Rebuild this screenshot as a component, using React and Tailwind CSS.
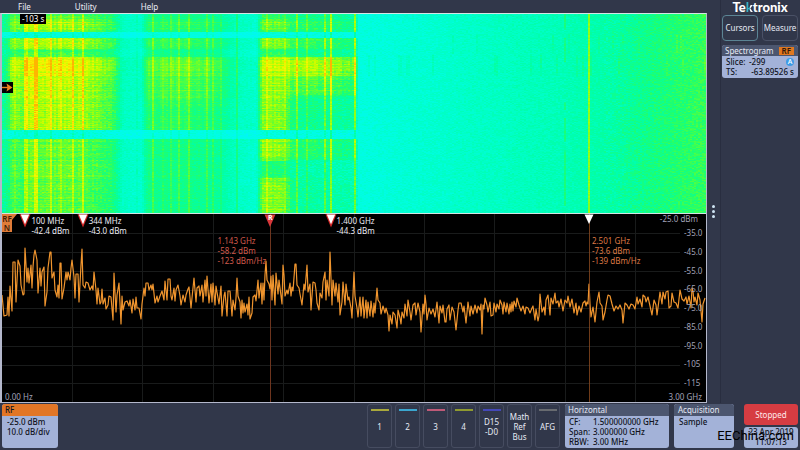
import React from "react";

const SPAN = 3000; // MHz shown across both plots

/* ---------- Spectrogram ---------- */

const COLS = 352;
const ROWS = 199;

function noise(x, y) {
  let h = (x * 374761393 + y * 668265263) | 0;
  h = Math.imul(h ^ (h >>> 13), 1274126177);
  return ((h ^ (h >>> 16)) >>> 0) / 4294967296;
}

// piecewise linear curve through [position, value] pairs
function curve(points, p) {
  if (p <= points[0][0]) return points[0][1];
  for (let i = 1; i < points.length; i++) {
    const [b, vb] = points[i];
    if (p <= b) {
      const [a, va] = points[i - 1];
      return va + ((vb - va) * (p - a)) / (b - a || 1);
    }
  }
  return points[points.length - 1][1];
}

const floorLevel = [
  [0, 0.26], [3, 0.24], [105, 0.24], [120, 0.14], [138, 0.12], [145, 0.22], [215, 0.19],
  [235, 0.14], [252, 0.11], [260, 0.22], [352, 0.18], [356, 0.09], [420, 0.13], [500, 0.18],
  [560, 0.21], [610, 0.25], [650, 0.33], [704, 0.42],
];
const burstGain = [
  [0, 0.02], [4, 0.12], [8, 0.38], [20, 0.42], [25, 0.56], [45, 0.56], [75, 0.52], [92, 0.44], [100, 0.34],
  [112, 0.26], [120, 0.06], [138, 0.05], [145, 0.28], [180, 0.34], [205, 0.3], [225, 0.16], [236, 0.06],
  [254, 0.05], [259, 0.47], [282, 0.48], [290, 0.42], [322, 0.42], [335, 0.38], [353, 0.32], [356, 0],
];
const activity = [
  [0, 0.4], [4, 0.5], [8, 0.72], [17, 0.6], [18, 0.02], [23, 0.02], [24, 0.82], [34, 0.7],
  [35, 0.35], [42, 0.35], [43, 0.98], [58, 1], [64, 0.86], [80, 0.84], [86, 0.74], [100, 0.7], [115, 0.76],
  [116, 0], [124, 0], [125, 0.5], [145, 0.46], [147, 0.56], [162, 0.56], [163, 0.44], [199, 0.46],
];
// how much of the activity reaches the 860 MHz and the 1.1-1.5 GHz bands
const midShare = [[0, 0.8], [42, 0.9], [80, 0.95], [95, 0.7], [116, 0.75], [125, 0.75], [199, 0.75]];
const lowerShare = [[0, 0.85], [42, 1], [124, 0.95], [125, 1.6], [145, 1.5], [147, 0.55], [162, 0.55], [164, 1.5], [199, 1.6]];
const upperShare = [[0, 0.55], [42, 0.7], [43, 1], [60, 1], [66, 0.75], [80, 0.75], [82, 0.35], [116, 0.3], [125, 0.8], [145, 0.75], [146, 0.15], [162, 0.15], [164, 0.3], [199, 0.35]];
const carriers = [
  [12, 1, 0.1], [17, 1, 0.1], [23, 2, 0.18], [33, 2, 0.28], [48, 2, 0.26], [58, 1, 0.12], [67, 1, 0.18],
  [70, 2, 0.22], [80, 1, 0.3], [93, 1, 0.09], [101, 1, 0.12], [113, 1, 0.14], [134, 1, 0.05], [150, 1, 0.17],
  [160, 1, 0.07], [168, 1, 0.14], [176, 1, 0.17], [186, 1, 0.18], [204, 1, 0.17], [210, 1, 0.15],
  [218, 1, 0.12], [234, 1, 0.2], [264, 2, 0.18], [282, 1, 0.14], [294, 1, 0.3],
  [304, 1, 0.2], [322, 2, 0.32], [328, 2, 0.48], [352, 2, 0.42],
];

function level(col, row) {
  const x = col * 2;
  let act = curve(activity, row);
  if (x > 122 && x < 240) act *= curve(midShare, row);
  if (x >= 256 && x < 356) {
    const mix = Math.max(0, Math.min(1, (x - 278) / 16));
    act *= curve(lowerShare, row) * (1 - mix) + curve(upperShare, row) * mix;
  }
  const idle = (row >= 116 && row < 125) || (row > 17 && row < 24);
  const rowJitter = 0.8 + 0.4 * noise(7, row);
  let v = curve(floorLevel, x) * (idle && x < 356 ? 0.4 : 1);
  v += curve(burstGain, x) * act * rowJitter * (0.85 + 0.3 * noise(col, 3));
  for (const [c, w, g] of carriers) {
    if (Math.abs(x - c) < w) v += g * (idle ? 0.4 : 0.65 + 0.35 * act);
  }
  if (x === 586) v += 0.36;
  if (x === 562 && noise(row >> 3, 9) > 0.35) v += 0.13;
  if (x > 356 && row > 40 && row < 62 && noise(col, 41) > 0.88) v += 0.06;
  if (x > 356 && row > 20 && row < 40 && noise(col, 43) > 0.94) v += 0.05;
  const spread = x < 118 || (x > 256 && x < 356) ? 0.13 : x > 600 ? 0.13 : 0.08;
  v += (noise(col, row + 500) - 0.5) * spread;
  return Math.max(0, Math.min(1, v));
}

const palette = [
  [0, [0, 246, 246]], [0.08, [0, 253, 226]], [0.16, [0, 255, 200]], [0.25, [0, 255, 168]], [0.38, [30, 255, 110]],
  [0.53, [110, 255, 40]], [0.67, [185, 255, 0]], [0.84, [250, 245, 0]], [1, [255, 180, 0]],
];
const SHADES = 30;

function shade(i) {
  const p = i / SHADES;
  const rgb = [0, 1, 2].map((k) => Math.round(curve(palette.map(([s, c]) => [s, c[k]]), p)));
  return `rgb(${rgb.join(",")})`;
}

function buildSpectrogram() {
  const paths = Array.from({ length: SHADES + 1 }, () => []);
  for (let r = 0; r < ROWS; r++) {
    let start = 0;
    let current = -1;
    for (let c = 0; c <= COLS; c++) {
      const s = c < COLS ? Math.round(level(c, r) * SHADES) : -2;
      if (s !== current) {
        if (current >= 0) paths[current].push(`M${start * 2} ${r}h${(c - start) * 2}v1H${start * 2}z`);
        current = s;
        start = c;
      }
    }
  }
  return paths.map((p) => p.join(""));
}

const spectrogram = buildSpectrogram();

function Spectrogram() {
  return (
    <section aria-label="Spectrogram" className="relative">
      <svg
        viewBox="0 0 704 199"
        preserveAspectRatio="none"
        shapeRendering="crispEdges"
        className="block h-[199px] w-full bg-[#00ffd0]"
      >
        {spectrogram.map((d, i) => (
          <path key={i} d={d} fill={shade(i)} />
        ))}
      </svg>
      <span className="absolute top-0 left-[18px] bg-black px-0.5 text-[8px] leading-[10px] text-white">-103 s</span>
      <svg viewBox="0 0 11 11" className="absolute top-17 left-0 size-[11px]">
        <rect width="11" height="11" fill="#000" />
        <path d="M0 5.5h6" stroke="#f08020" strokeWidth="1.4" />
        <path d="M4.5 1.5L10.5 5.5L4.5 9.5L5.5 5.5z" fill="#f08020" />
      </svg>
    </section>
  );
}

/* ---------- Spectrum ---------- */

const trace =
  "2,295 4,316 7,315 8,297 9,316 10,286 12,311 13,262 15,262 16,302 18,260 20,266 21,285 23,295 24,294 25,248 27,282 28,268 29,283 31,265 32,288 33,267 34,255 35,250 37,260 38,293 40,268 41,286 42,272 44,267 45,306 47,292 48,268 50,252 51,252 52,278 54,272 55,290 57,297 58,285 59,298 60,263 61,263 62,299 64,288 66,272 67,280 68,272 70,280 71,268 72,260 74,277 75,298 76,274 78,274 79,302 81,265 82,249 83,285 85,288 86,282 88,283 90,290 92,286 93,290 94,272 96,290 97,304 98,288 100,304 101,302 102,289 103,304 105,298 106,309 108,305 109,296 111,297 113,320 114,273 116,312 117,295 119,283 121,324 122,296 123,310 125,302 127,301 129,306 130,300 132,313 133,299 135,310 136,297 137,308 139,308 141,319 142,304 144,288 145,296 146,283 148,283 149,290 151,285 152,290 153,284 155,303 157,296 158,302 160,296 162,291 164,300 165,281 167,300 168,279 170,279 171,296 172,300 174,288 175,301 176,290 178,285 180,296 181,305 183,295 185,302 186,295 188,289 189,287 191,308 193,288 194,278 196,302 197,288 199,286 200,296 202,285 203,302 205,280 206,296 207,276 209,303 211,284 212,302 213,283 215,305 216,286 218,298 219,304 221,286 222,316 224,296 225,292 227,316 228,291 230,291 232,316 233,300 235,310 236,298 237,278 238,296 240,302 241,318 242,300 243,313 244,303 245,312 247,304 248,315 249,297 250,319 252,313 253,297 255,295 256,301 258,280 259,298 260,290 261,283 262,304 263,283 264,300 265,275 266,261 267,280 269,284 270,289 271,276 272,300 273,275 275,305 276,273 278,294 279,280 281,296 282,304 283,265 284,275 285,296 287,290 288,294 290,283 291,296 292,287 293,291 295,264 296,264 297,285 299,288 300,294 302,305 304,284 305,290 307,265 308,292 310,284 311,310 313,282 315,283 316,290 317,303 319,310 320,293 322,298 323,282 325,272 326,300 327,280 329,296 330,252 332,305 333,280 335,296 336,283 338,302 339,284 340,315 342,302 343,282 345,305 346,284 348,300 349,297 351,308 352,318 354,272 355,296 357,308 358,317 360,297 361,316 363,297 364,318 366,300 367,318 368,302 370,316 371,301 373,317 374,303 375,313 377,288 378,300 380,303 381,314 383,306 385,313 386,308 388,315 389,331 390,315 392,324 393,312 395,315 397,328 398,310 400,318 401,324 402,312 404,318 405,304 407,316 408,300 410,312 411,320 413,305 415,303 416,315 418,303 420,312 421,332 423,304 424,314 425,295 426,304 427,320 429,308 431,314 433,309 435,317 437,302 439,323 440,306 442,313 443,305 445,322 446,322 447,309 449,305 450,320 452,307 454,312 456,330 458,310 459,303 461,303 463,312 464,306 466,323 468,302 470,316 471,306 473,314 475,305 477,313 478,306 480,310 481,304 482,334 483,305 484,309 485,298 487,305 488,312 490,302 491,316 493,315 494,303 496,312 497,304 499,309 500,300 502,305 503,314 504,302 506,312 507,303 509,314 510,304 511,312 512,302 513,311 514,301 516,307 517,298 519,305 521,311 523,306 525,314 526,307 528,308 530,313 532,308 533,306 535,320 536,309 538,321 539,316 540,294 542,312 544,307 545,315 546,300 548,295 550,315 551,298 553,304 555,293 556,303 558,301 559,307 561,299 563,311 565,300 567,303 568,296 570,307 572,299 574,313 576,303 577,315 579,306 581,312 583,303 585,301 586,306 587,302 588,304 589,284 590,304 591,317 593,307 595,322 597,302 599,292 600,303 602,306 603,320 605,312 607,300 608,295 610,296 612,304 614,311 616,306 618,309 620,305 622,310 623,323 625,303 627,305 629,309 631,304 633,305 635,309 637,297 638,304 640,299 642,307 643,295 645,297 646,302 648,297 650,306 652,315 654,300 656,305 657,315 659,300 660,292 662,304 663,292 665,299 666,292 668,291 669,308 671,306 672,293 674,302 676,303 678,308 680,290 682,299 684,301 686,297 687,304 689,296 691,308 692,288 693,291 694,302 695,297 697,305 698,293 700,300 702,322 703,304 705,298";

const gridX = [1, 2, 3, 4, 5, 6, 7, 8, 9];
const gridY = [233, 252, 271, 290, 308, 327, 346, 365, 383];
const axis = ["-35.0", "-45.0", "-55.0", "-65.0", "-75.0", "-85.0", "-95.0", "-105", "-115"];

const at = (mhz) => ({ left: `${(mhz / SPAN) * 100}%` });

function PeakMarker({ mhz, children }) {
  return (
    <div className="absolute top-0" style={at(mhz)}>
      <svg viewBox="0 0 12 14" className="absolute top-0 -left-1.5 h-3.5 w-3">
        <path d="M.5 .3H11.5L6 13.5z" fill="#d42626" />
        <path d="M1.8 .6H10.2L6 10.2z" fill="#fff" />
      </svg>
      <p className="ml-1.5 pt-0.5 whitespace-nowrap text-[#ececf4]">{children}</p>
    </div>
  );
}

function Spectrum() {
  return (
    <section
      aria-label="Spectrum"
      className="relative border-t border-[#d4e4e4] bg-black text-[8px] leading-[10px]"
    >
      <svg viewBox="2 214 704 188" preserveAspectRatio="none" className="block h-[188px] w-full">
        <g stroke="#191b1b" shapeRendering="crispEdges">
          {gridX.map((n) => (
            <path key={n} d={`M${2 + n * 70.4} 214v188`} />
          ))}
          {gridY.map((y) => (
            <path key={y} d={`M2 ${y}h678`} />
          ))}
        </g>
        <path d="M270.5 214V402" stroke="#6e351e" />
        <polyline points={trace} fill="none" stroke="#f0952e" strokeWidth="1.2" strokeLinejoin="round" />
        <path d="M589.5 214V402" stroke="#8a4a20" opacity=".8" />
      </svg>

      <svg viewBox="0 0 15 18" className="absolute top-0 left-0 h-[18px] w-[15px]">
        <path d="M0 0H15L10 6V18H0z" fill="#e07c38" />
      </svg>
      <p className="absolute top-0 left-0 w-2.5 text-center leading-[9px] font-semibold text-[#402008]">
        RF<br />N
      </p>

      <PeakMarker mhz={100}>100 MHz<br />-42.4 dBm</PeakMarker>
      <PeakMarker mhz={344}>344 MHz<br />-43.0 dBm</PeakMarker>
      <PeakMarker mhz={1400}>1.400 GHz<br />-44.3 dBm</PeakMarker>

      <div className="absolute top-0" style={at(1143)}>
        <svg viewBox="0 0 12 14" className="absolute top-0 -left-1.5 h-3.5 w-3">
          <path d="M.5 .5H11.5L6 13z" fill="#d8373a" />
        </svg>
        <b className="absolute top-0 -left-1.5 w-3 text-center text-[7px] leading-[8px] text-white">R</b>
        <p className="absolute top-[22px] right-1 whitespace-nowrap text-[#d05a4c]">
          1.143 GHz<br />-58.2 dBm<br />-123 dBm/Hz
        </p>
      </div>

      <div className="absolute top-0" style={at(2501)}>
        <svg viewBox="0 0 10 11" className="absolute top-0 -left-[5px] h-[11px] w-2.5">
          <path d="M.5 .5H9.5L5 10z" fill="#fff" />
        </svg>
        <p className="absolute top-[22px] left-[3px] whitespace-nowrap text-[#dc7844]">
          2.501 GHz<br />-73.6 dBm<br />-139 dBm/Hz
        </p>
      </div>

      <div className="text-[#a2a2b8]">
        <p className="absolute top-0 right-2">-25.0 dBm</p>
        <ol className="absolute top-3.5 right-1 flex h-40 w-[18px] flex-col justify-between">
          {axis.map((a) => (
            <li key={a}>{a}</li>
          ))}
        </ol>
        <p className="absolute bottom-0 left-[3px]">0.00 Hz</p>
        <p className="absolute right-1 bottom-0">3.00 GHz</p>
      </div>
    </section>
  );
}

/* ---------- Side bar ---------- */

function Sidebar() {
  return (
    <aside className="w-20 shrink-0 border-l border-[#292e40] pr-0.5 pl-px">
      <h1 className="flex h-[15px] items-center justify-center pb-0.5 font-[Lato,sans-serif] text-[13px] leading-[12px] font-black text-white">
        Te
        <span className="bg-linear-to-r from-[#38b0c4] from-50% to-white to-60% bg-clip-text text-transparent">k</span>
        tronix
      </h1>
      <div className="grid grid-cols-2 gap-1">
        <button className="h-[26px] rounded-sm border border-[#5b8494] text-[8px] text-[#e6eaf4]">Cursors</button>
        <button className="h-[26px] rounded-sm border border-[#4a5166] text-[8px] text-[#e6eaf4]">Measure</button>
      </div>
      <section className="mt-1 overflow-hidden rounded-[3px] bg-[#a3b2d8] text-[8px] leading-[10px] text-[#10131c]">
        <header className="flex h-[11px] items-center justify-between bg-[#4c566f] pr-1 pl-[3px] text-[#e6eaf4]">
          <h2>Spectrogram</h2>
          <span className="bg-[#e07820] px-[3px] leading-[8px] font-semibold text-[#30180a]">RF</span>
        </header>
        <dl className="grid grid-cols-[auto_1fr] pt-px pb-px pl-1 font-medium">
          <dt className="w-[23px]">Slice:</dt>
          <dd className="flex items-center justify-between pr-1">
            -299
            <span className="grid size-2 place-items-center rounded-full bg-[#3d9be6] text-[7px] leading-[8px] text-white">
              A
            </span>
          </dd>
          <dt>TS:</dt>
          <dd className="pr-1 text-right">-63.89526 s</dd>
        </dl>
      </section>
    </aside>
  );
}

/* ---------- Bottom bar ---------- */

const channels = [
  { label: ["1"], bar: "bg-[#a9a83c]" },
  { label: ["2"], bar: "bg-[#3ba6cf]" },
  { label: ["3"], bar: "bg-[#bf5a78]" },
  { label: ["4"], bar: "bg-[#8f9a30]" },
  { label: ["D15", "-D0"], bar: "bg-[#4448b8]" },
  { label: ["Math", "Ref", "Bus"], bar: "" },
  { label: ["AFG"], bar: "bg-[#686b70]" },
];

function BottomBar() {
  return (
    <footer className="flex gap-[5px] px-0.5 pt-px pb-px text-[8px] leading-[10px] text-[#10131c]">
      <section className="mr-auto w-14 overflow-hidden rounded-[3px] bg-[#a3b2d8]">
        <h2 className="bg-[#e27626] pl-[3px] leading-[12px] font-medium">RF</h2>
        <p className="pt-px pl-[5px] font-medium">
          -25.0 dBm<br />10.0 dB/div
        </p>
      </section>
      <div className="flex gap-[3px]">
        {channels.map(({ label, bar }) => (
          <button
            key={label[0]}
            className="relative flex h-11 w-[25px] flex-col items-center justify-center rounded-[3px] border border-[#464c60] pt-px text-[8px] leading-[10px] text-[#e6eaf4]"
          >
            {bar && <span className={`absolute top-1 h-0.5 w-[18px] ${bar}`} />}
            {label.map((l) => (
              <span key={l}>{l}</span>
            ))}
          </button>
        ))}
      </div>
      <section className="w-[104px] overflow-hidden rounded-[3px] bg-[#a3b2d8]">
        <h2 className="bg-[#4c566f] pl-[3px] leading-[12px] text-[#e6eaf4]">Horizontal</h2>
        <dl className="grid grid-cols-[24px_1fr] pt-px pl-1 font-medium">
          <dt>CF:</dt>
          <dd>1.500000000 GHz</dd>
          <dt>Span:</dt>
          <dd>3.000000 GHz</dd>
          <dt>RBW:</dt>
          <dd>3.00 MHz</dd>
        </dl>
      </section>
      <section className="w-[60px] overflow-hidden rounded-[3px] bg-[#a3b2d8]">
        <h2 className="bg-[#4c566f] pl-1 leading-[12px] text-[#e6eaf4]">Acquisition</h2>
        <p className="pt-px pl-[5px] font-medium">Sample</p>
      </section>
      <div className="relative ml-[5px] flex w-[54px] flex-col gap-0.5">
        <button className="h-[21px] rounded-[3px] bg-[#d63c42] pt-px text-[8px] text-[#ffe9ea]">Stopped</button>
        <time className="flex-1 rounded-[3px] bg-[#a3b2d8] text-center font-medium">
          23 Apr 2019<br />11:07:13
        </time>
        <span className="absolute right-1 bottom-1 font-[Roboto,sans-serif] text-[13px] leading-[16px] text-black">
          EEChina.com
        </span>
      </div>
    </footer>
  );
}

export default function App() {
  return (
    <div className="flex min-h-screen flex-col bg-[#31374a] font-['Noto_Sans','Open_Sans',sans-serif]">
      <div className="flex">
        <main className="min-w-0 flex-1">
          <nav className="flex h-[13px] gap-11 pl-[18px] text-[8px] leading-[12px] text-[#eceef6]">
            <button>File</button>
            <button>Utility</button>
            <button>Help</button>
          </nav>
          <div className="border border-l-2 border-[#b4b8cc] border-t-[#d4e4e4]">
            <Spectrogram />
            <Spectrum />
          </div>
        </main>
        <div className="flex w-[13px] shrink-0 flex-col items-center justify-center gap-0.5">
          <i className="mt-5 size-[3px] rounded-full bg-[#cfe4f4]" />
          <i className="size-[3px] rounded-full bg-[#cfe4f4]" />
          <i className="size-[3px] rounded-full bg-[#cfe4f4]" />
        </div>
        <Sidebar />
      </div>
      <BottomBar />
    </div>
  );
}
